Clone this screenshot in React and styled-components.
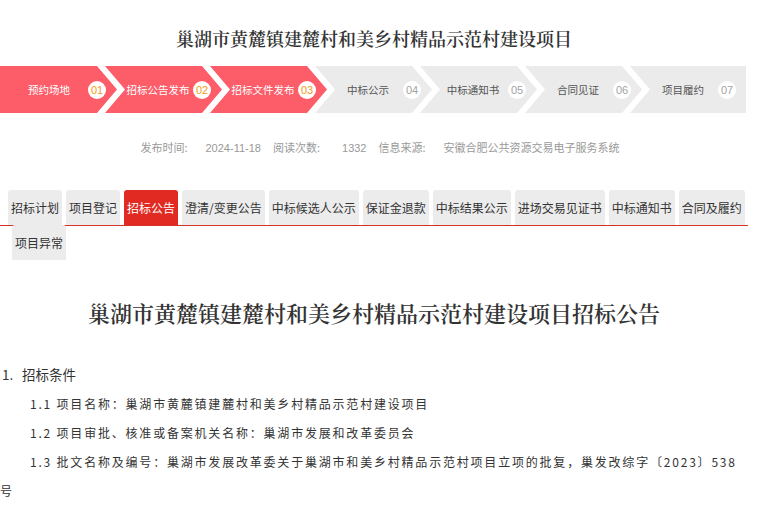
import React from 'react';
import styled, { createGlobalStyle } from 'styled-components';

const steps = [
  { name: '预约场地', no: '01', done: true },
  { name: '招标公告发布', no: '02', done: true },
  { name: '招标文件发布', no: '03', done: true },
  { name: '中标公示', no: '04' },
  { name: '中标通知书', no: '05' },
  { name: '合同见证', no: '06' },
  { name: '项目履约', no: '07' },
];

const meta = [
  { label: '发布时间:', value: '2024-11-18' },
  { label: '阅读次数:', value: '1332', wide: true },
  { label: '信息来源:', value: '安徽合肥公共资源交易电子服务系统' },
];

const tabs = [
  '招标计划', '项目登记', '招标公告', '澄清/变更公告', '中标候选人公示',
  '保证金退款', '中标结果公示', '进场交易见证书', '中标通知书', '合同及履约', '项目异常',
];

const items = [
  { no: '1.1', text: '项目名称：巢湖市黄麓镇建麓村和美乡村精品示范村建设项目' },
  { no: '1.2', text: '项目审批、核准或备案机关名称：巢湖市发展和改革委员会' },
  { no: '1.3', text: '批文名称及编号：巢湖市发展改革委关于巢湖市和美乡村精品示范村项目立项的批复，巢发改综字〔2023〕538号' },
];

const App = () => {
  return (
    <>
      <Global />
      <Page>
        <Title>巢湖市黄麓镇建麓村和美乡村精品示范村建设项目</Title>
        <Steps>
          {steps.map((s, i) => (
            <Step key={s.no} $done={s.done} $first={i === 0} $last={i === steps.length - 1}>
              <StepName>{s.name}</StepName>
              <StepNo $done={s.done}>{s.no}</StepNo>
            </Step>
          ))}
        </Steps>
        <Meta>
          {meta.map(m => (
            <MetaItem key={m.label}>
              <MetaLabel $wide={m.wide}>{m.label}</MetaLabel>
              <MetaValue>{m.value}</MetaValue>
            </MetaItem>
          ))}
        </Meta>
        <TabBar>
          {tabs.map((t, i) => (
            <Tab key={t} $active={i === 2} $wrapped={i === tabs.length - 1}>{t}</Tab>
          ))}
        </TabBar>
        <Heading>巢湖市黄麓镇建麓村和美乡村精品示范村建设项目招标公告</Heading>
        <Section>
          <SectionTitle><span>1.</span>招标条件</SectionTitle>
          {items.map(it => (
            <Item key={it.no}>{it.no} {it.text}</Item>
          ))}
        </Section>
      </Page>
    </>
  );
};

export default App;

const Global = createGlobalStyle`
  body {
    margin: 0;
    background: #fff;
    font-family: "Noto Sans CJK SC", "Noto Sans", sans-serif;
  }
`;

const Page = styled.div`
  display: flex;
  flex-direction: column;
  width: 748px;
`;

const Title = styled.h1`
  margin: 0;
  padding-top: 22px;
  height: 32px;
  line-height: 32px;
  text-align: center;
  font-family: "Noto Serif CJK SC", "Source Han Serif SC", "Noto Sans CJK SC", serif;
  font-size: 18px;
  font-weight: 600;
  color: #333;
`;

const Steps = styled.div`
  display: flex;
  margin-top: 12px;
  width: 746px;
  height: 47px;
`;

const Step = styled.div`
  flex: 0 0 ${p => (p.$last ? 116 : 117)}px;
  margin-right: ${p => (p.$last ? 0 : -12)}px;
  box-sizing: border-box;
  display: grid;
  grid-template-columns: ${p => (p.$first ? 78 : 70)}px 18px;
  align-items: center;
  padding-left: ${p => (p.$first ? 10 : 18)}px;
  background: ${p => (p.$done ? '#fd5c69' : '#ebebeb')};
  color: ${p => (p.$done ? '#fff' : '#555')};
  clip-path: ${p =>
    p.$last
      ? 'polygon(0 0, 100% 0, 100% 100%, 0 100%, 20px 50%)'
      : p.$first
      ? 'polygon(0 0, 97px 0, 117px 50%, 97px 100%, 0 100%)'
      : 'polygon(0 0, 97px 0, 117px 50%, 97px 100%, 0 100%, 20px 50%)'};
`;

const StepName = styled.span`
  font-size: 10.5px;
  text-align: center;
  white-space: nowrap;
`;

const StepNo = styled.span`
  width: 18px;
  height: 18px;
  border-radius: 50%;
  background: #fff;
  display: flex;
  align-items: center;
  justify-content: center;
  font-family: "Liberation Sans", Arial, sans-serif;
  font-size: 11px;
  color: ${p => (p.$done ? '#f39a1c' : '#a3a3a3')};
`;

const Meta = styled.div`
  display: flex;
  justify-content: center;
  align-items: center;
  gap: 12px;
  margin-top: 24px;
  padding-left: 12px;
  height: 20px;
  line-height: 20px;
  font-size: 11px;
  color: #999;
`;

const MetaItem = styled.span`
  display: flex;
  align-items: baseline;
`;

const MetaLabel = styled.span`
  margin-right: ${p => (p.$wide ? 22 : 18)}px;
`;

const MetaValue = styled.span`
  font-family: "Liberation Sans", "Noto Sans CJK SC", sans-serif;
`;

const TabBar = styled.div`
  display: flex;
  flex-wrap: wrap;
  align-content: flex-start;
  column-gap: 4px;
  box-sizing: border-box;
  width: 748px;
  height: 36px;
  margin-top: 33px;
  margin-bottom: 35px;
  padding-left: 8px;
  border-bottom: 1px solid #d8312a;
`;

const Tab = styled.div`
  height: 35px;
  line-height: 35px;
  padding: 0 3px;
  margin-left: ${p => (p.$wrapped ? 4 : 0)}px;
  border-radius: 3px 3px 0 0;
  font-size: 12px;
  white-space: nowrap;
  background: ${p => (p.$active ? '#e12a22' : '#ececec')};
  color: ${p => (p.$active ? '#fff' : '#333')};
`;

const Heading = styled.h2`
  margin: 37px 0 0;
  line-height: 30px;
  text-align: center;
  font-family: "Noto Serif CJK SC", "Source Han Serif SC", "Noto Sans CJK SC", serif;
  font-size: 22px;
  font-weight: 600;
  color: #333;
`;

const Section = styled.div`
  margin-top: 32px;
  line-height: 29px;
  color: #333;
`;

const SectionTitle = styled.div`
  font-size: 13.5px;
  span {
    display: inline-block;
    width: 22px;
    padding-left: 2px;
    box-sizing: border-box;
  }
`;

const Item = styled.p`
  margin: 0;
  text-indent: 30px;
  font-size: 12px;
  letter-spacing: 1.8px;
`;
